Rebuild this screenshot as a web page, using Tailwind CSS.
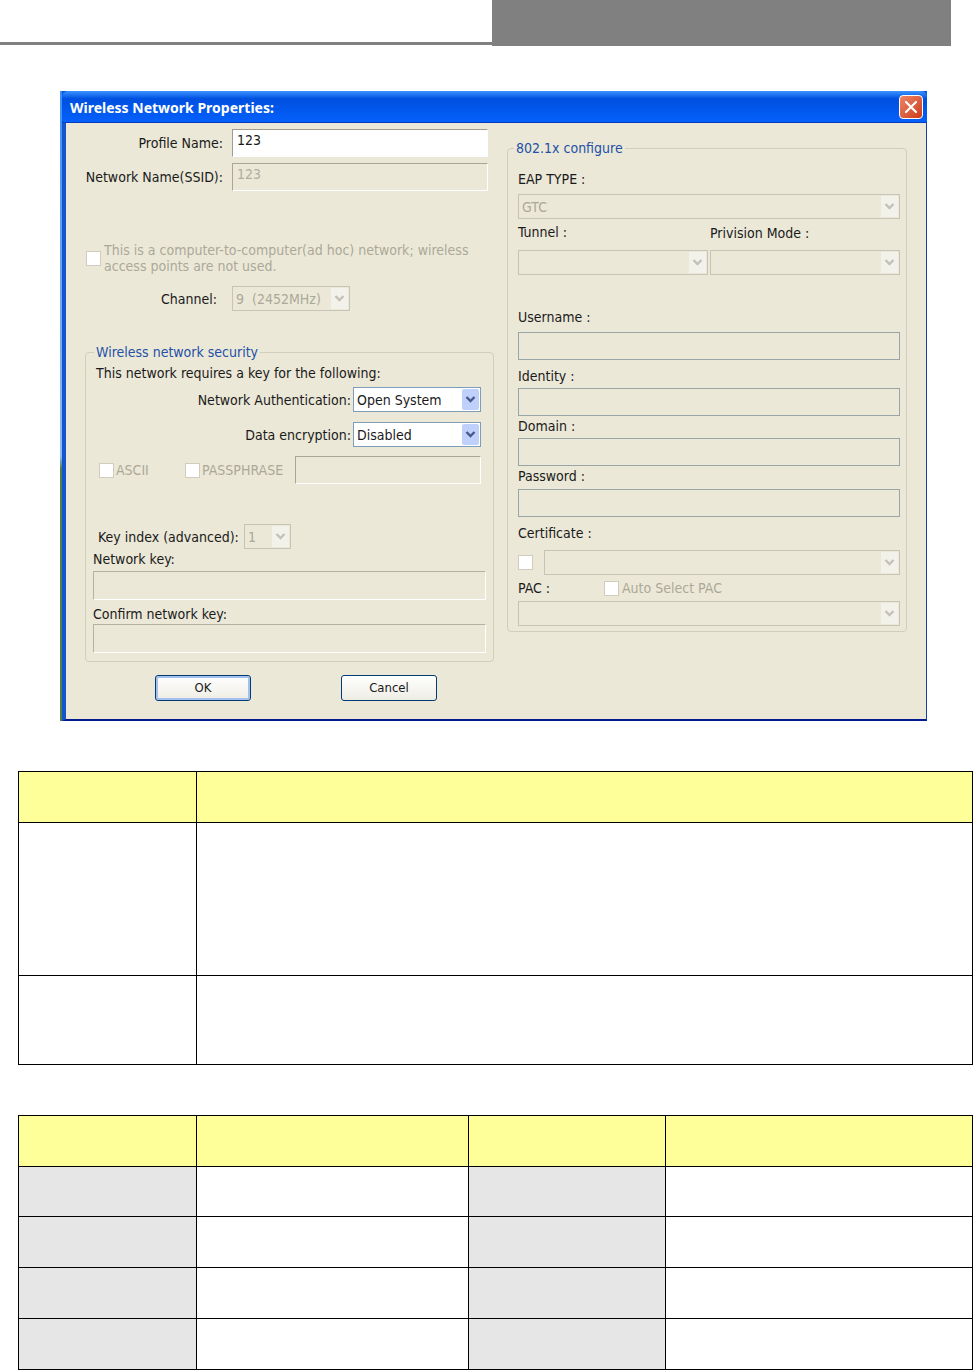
<!DOCTYPE html>
<html lang="en">

<head>
  <meta charset="UTF-8" />
  <meta name="viewport" content="width=device-width, initial-scale=1.0" />
  <title>Wireless Network Properties</title>
  <script src="https://cdn.jsdelivr.net/npm/@tailwindcss/browser@4"></script>
</head>

<body class="bg-white text-[#1a1a1a] text-[14px] leading-5 font-['DejaVu_Sans_Condensed','DejaVu_Sans',sans-serif]">

  <!-- Page header -->
  <header class="flex items-start pr-[22px]">
    <div class="flex-1 h-[45px] border-b-3 border-[#808080]"></div>
    <div class="w-[459px] h-[46px] bg-[#808080]"></div>
  </header>

  <main>
    <!-- Dialog -->
    <section class="mt-[45px] ml-[60px] mr-[46px] flex bg-[#0a55e0]">
      <div class="w-[2px] bg-linear-to-b from-[#3d8ff5] from-0% via-[#8fb8f0] via-58% to-[#4f8048] to-60%"></div>

      <div class="flex-1 min-w-0">
        <div class="h-8 flex items-center justify-between pl-2 pr-1 rounded-t-md bg-linear-to-b from-[#3a93ff] via-[#0050e0] via-25% to-[#0560fa] border-b border-[#0040c0]">
          <h1 class="pt-[2px] text-white text-[14px] font-bold font-['Noto_Sans',sans-serif]">Wireless Network Properties:</h1>
          <button type="button" aria-label="Close" class="size-6 rounded-[4px] border border-white bg-linear-to-br from-[#ee8465] to-[#cc3a14] flex items-center justify-center">
            <svg class="size-4" viewBox="0 0 16 16" fill="none" stroke="#fff" stroke-width="2.2" stroke-linecap="round">
              <path d="M3 3l10 10M13 3L3 13" />
            </svg>
          </button>
        </div>

        <form class="flex items-start gap-[13px] pl-[19px] pr-[19px] pb-[18px] bg-[#ebe8d7] border-l-4 border-r border-b-2 border-l-[#1555cc] border-r-[#1c3fa8] border-b-[#001a90]">

          <!-- Left column -->
          <div class="w-[409px] shrink-0 pt-[6px]">
            <div class="flex items-center gap-[9px] pr-[6px]">
              <label for="profile" class="w-[138px] text-right whitespace-nowrap">Profile Name:</label>
              <input id="profile" type="text" value="123" class="flex-1 min-w-0 h-7 px-1 pb-[6px] bg-white border border-t-[#a09d90] border-l-[#a09d90] border-r-white border-b-white" />
            </div>
            <div class="mt-[6px] flex items-center gap-[9px] pr-[6px]">
              <label for="ssid" class="w-[138px] text-right whitespace-nowrap">Network Name(SSID):</label>
              <input id="ssid" type="text" value="123" disabled class="flex-1 min-w-0 h-7 px-1 pb-[6px] text-[#b0ad9f] border border-t-[#a9a698] border-l-[#a9a698] border-r-white border-b-white" />
            </div>

            <div class="mt-[51px] flex items-center gap-[3px] text-[#aca899]">
              <input id="adhoc" type="checkbox" disabled class="appearance-none size-[15px] shrink-0 ml-px bg-white border border-[#d0cdbf]" />
              <label for="adhoc" class="leading-4 whitespace-nowrap">This is a computer-to-computer(ad hoc) network; wireless<br />access points are not used.</label>
            </div>

            <div class="mt-3 flex items-center gap-[15px]">
              <label for="channel" class="w-[132px] text-right">Channel:</label>
              <div class="relative w-[118px] h-[25px]">
                <select id="channel" disabled class="appearance-none w-full h-full px-[3px] text-[#aca899] border border-[#c6c4b6] opacity-100">
                  <option>9&nbsp; (2452MHz)</option>
                </select>
                <svg class="absolute right-[2px] top-[2px] w-[17px] h-[21px] bg-[#f2f1ea] pointer-events-none" viewBox="0 0 17 21" fill="none" stroke="#c4c2b8" stroke-width="2.4"><path d="M4.500 8l4 4 4-4" /></svg>
              </div>
            </div>

            <fieldset class="mt-[31px] px-[7px] pb-2 border border-[#d0cebf] rounded-[4px]">
              <legend class="ml-px px-[2px] text-[#2450a8]">Wireless network security</legend>
              <p class="pl-[3px] leading-[22px]">This network requires a key for the following:</p>

              <div class="mt-[3px] pr-[5px] flex items-center justify-end gap-[2px]">
                <label for="auth">Network Authentication:</label>
                <div class="relative w-32 h-[25px]">
                  <select id="auth" class="appearance-none w-full h-full px-[3px] bg-white border border-[#7f9db9]">
                    <option>Open System</option>
                    <option>Shared Key</option>
                  </select>
                  <svg class="absolute right-[2px] top-[2px] w-[17px] h-[21px] rounded-[2px] bg-[#bfd0fb] pointer-events-none" viewBox="0 0 17 21" fill="none" stroke="#45598c" stroke-width="2.4"><path d="M4.500 8l4 4 4-4" /></svg>
                </div>
              </div>

              <div class="mt-[10px] pr-[5px] flex items-center justify-end gap-[2px]">
                <label for="encryption">Data encryption:</label>
                <div class="relative w-32 h-[25px]">
                  <select id="encryption" class="appearance-none w-full h-full px-[3px] bg-white border border-[#7f9db9]">
                    <option>Disabled</option>
                    <option>WEP</option>
                  </select>
                  <svg class="absolute right-[2px] top-[2px] w-[17px] h-[21px] rounded-[2px] bg-[#bfd0fb] pointer-events-none" viewBox="0 0 17 21" fill="none" stroke="#45598c" stroke-width="2.4"><path d="M4.500 8l4 4 4-4" /></svg>
                </div>
              </div>

              <div class="mt-[9px] pl-[6px] pr-[5px] flex items-center text-[#aca899]">
                <div class="w-[86px] flex items-center gap-[2px]">
                  <input id="ascii" type="checkbox" disabled class="appearance-none size-[15px] bg-white border border-[#d0cdbf]" />
                  <label for="ascii">ASCII</label>
                </div>
                <div class="w-[110px] flex items-center gap-[2px]">
                  <input id="usePass" type="checkbox" disabled class="appearance-none size-[15px] bg-white border border-[#d0cdbf]" />
                  <label for="usePass">PASSPHRASE</label>
                </div>
                <input type="text" aria-label="Passphrase" disabled class="flex-1 min-w-0 h-7 px-1 border border-t-[#a9a698] border-l-[#a9a698] border-r-white border-b-white" />
              </div>

              <div class="mt-10 pl-[5px] flex items-center">
                <label for="keyIndex" class="w-[146px] whitespace-nowrap">Key index (advanced):</label>
                <div class="relative w-[47px] h-[25px]">
                  <select id="keyIndex" disabled class="appearance-none w-full h-full px-[3px] text-[#aca899] border border-[#c6c4b6] opacity-100">
                    <option>1</option>
                  </select>
                  <svg class="absolute right-[2px] top-[2px] w-[17px] h-[21px] bg-[#f2f1ea] pointer-events-none" viewBox="0 0 17 21" fill="none" stroke="#c4c2b8" stroke-width="2.4"><path d="M4.500 8l4 4 4-4" /></svg>
                </div>
              </div>

              <label for="key" class="block">Network key:</label>
              <input id="key" type="password" disabled class="mt-[2px] block w-full h-[29px] px-1 border border-t-[#b5b2a4] border-l-[#b5b2a4] border-r-white border-b-white" />
              <label for="confirmKey" class="mt-1 block">Confirm network key:</label>
              <input id="confirmKey" type="password" disabled class="block w-full h-[29px] px-1 border border-t-[#b5b2a4] border-l-[#b5b2a4] border-r-white border-b-white" />
            </fieldset>

            <div class="mt-[13px] pl-[70px] flex gap-[90px] text-[13px]">
              <button type="submit" class="w-24 h-[26px] rounded-[3px] border border-[#003c74] bg-linear-to-b from-white to-[#eeede4] ring-2 ring-inset ring-[#a5c0ee]">OK</button>
              <button type="button" class="w-24 h-[26px] rounded-[3px] border border-[#003c74] bg-linear-to-b from-white to-[#eeede4]">Cancel</button>
            </div>
          </div>

          <!-- 802.1x column -->
          <fieldset class="mt-[15px] flex-1 min-w-0 pl-[10px] pr-[6px] pb-[5px] border border-[#d0cebf] rounded-[4px]">
            <legend class="-ml-1 px-[2px] text-[#2450a8]">802.1x configure</legend>

            <label for="eap" class="mt-[11px] block">EAP TYPE :</label>
            <div class="relative mt-[5px] h-[25px]">
              <select id="eap" disabled class="appearance-none w-full h-full px-[3px] text-[#aca899] border border-[#c6c4b6] opacity-100">
                <option>GTC</option>
              </select>
              <svg class="absolute right-[2px] top-[2px] w-[17px] h-[21px] bg-[#f2f1ea] pointer-events-none" viewBox="0 0 17 21" fill="none" stroke="#c4c2b8" stroke-width="2.4"><path d="M4.500 8l4 4 4-4" /></svg>
            </div>

            <div class="mt-[3px] grid grid-cols-2 gap-x-[2px] gap-y-[7px]">
              <label for="tunnel">Tunnel :</label>
              <label for="provision" class="pt-px">Privision Mode :</label>
              <div class="relative h-[25px]">
                <select id="tunnel" disabled class="appearance-none w-full h-full border border-[#c6c4b6] opacity-100"></select>
                <svg class="absolute right-[2px] top-[2px] w-[17px] h-[21px] bg-[#f2f1ea] pointer-events-none" viewBox="0 0 17 21" fill="none" stroke="#c4c2b8" stroke-width="2.4"><path d="M4.500 8l4 4 4-4" /></svg>
              </div>
              <div class="relative h-[25px]">
                <select id="provision" disabled class="appearance-none w-full h-full border border-[#c6c4b6] opacity-100"></select>
                <svg class="absolute right-[2px] top-[2px] w-[17px] h-[21px] bg-[#f2f1ea] pointer-events-none" viewBox="0 0 17 21" fill="none" stroke="#c4c2b8" stroke-width="2.4"><path d="M4.500 8l4 4 4-4" /></svg>
              </div>
            </div>

            <label for="username" class="mt-8 block">Username :</label>
            <input id="username" type="text" disabled class="mt-[5px] block w-full h-7 px-1 border border-[#9aa5a8]" />
            <label for="identity" class="mt-[6px] block">Identity :</label>
            <input id="identity" type="text" disabled class="mt-[2px] block w-full h-7 px-1 border border-[#9aa5a8]" />
            <label for="domain" class="block">Domain :</label>
            <input id="domain" type="text" disabled class="mt-[2px] block w-full h-7 px-1 border border-[#9aa5a8]" />
            <label for="password" class="block">Password :</label>
            <input id="password" type="password" disabled class="mt-[3px] block w-full h-7 px-1 border border-[#9aa5a8]" />

            <label for="certificate" class="mt-[6px] block">Certificate :</label>
            <div class="mt-[7px] flex items-center gap-[11px]">
              <input type="checkbox" aria-label="Use certificate" disabled class="appearance-none size-[15px] bg-white border border-[#d0cdbf]" />
              <div class="relative flex-1 h-[25px]">
                <select id="certificate" disabled class="appearance-none w-full h-full border border-[#c6c4b6] opacity-100"></select>
                <svg class="absolute right-[2px] top-[2px] w-[17px] h-[21px] bg-[#f2f1ea] pointer-events-none" viewBox="0 0 17 21" fill="none" stroke="#c4c2b8" stroke-width="2.4"><path d="M4.500 8l4 4 4-4" /></svg>
              </div>
            </div>

            <div class="mt-[3px] flex items-center">
              <label for="pac" class="w-[86px]">PAC :</label>
              <input id="autoPac" type="checkbox" disabled class="appearance-none size-[15px] bg-white border border-[#d0cdbf]" />
              <label for="autoPac" class="ml-[3px] text-[#aca899]">Auto Select PAC</label>
            </div>
            <div class="relative mt-[3px] h-[25px]">
              <select id="pac" disabled class="appearance-none w-full h-full border border-[#c6c4b6] opacity-100"></select>
              <svg class="absolute right-[2px] top-[2px] w-[17px] h-[21px] bg-[#f2f1ea] pointer-events-none" viewBox="0 0 17 21" fill="none" stroke="#c4c2b8" stroke-width="2.4"><path d="M4.500 8l4 4 4-4" /></svg>
            </div>
          </fieldset>
        </form>
      </div>
    </section>

    <!-- Parameter table -->
    <div class="mt-[50px] pl-[18px]">
      <table class="w-full table-fixed border-collapse border border-black">
        <colgroup>
          <col class="w-[178px]" />
          <col />
        </colgroup>
        <thead>
          <tr class="h-[51px] bg-[#ffff99]">
            <th class="border border-black"></th>
            <th class="border border-black"></th>
          </tr>
        </thead>
        <tbody>
          <tr class="h-[153px]">
            <td class="border border-black"></td>
            <td class="border border-black"></td>
          </tr>
          <tr class="h-[89px]">
            <td class="border border-black"></td>
            <td class="border border-black"></td>
          </tr>
        </tbody>
      </table>
    </div>

    <!-- Value table -->
    <div class="mt-[50px] pl-[18px]">
      <table class="w-full table-fixed border-collapse border border-black">
        <colgroup>
          <col class="w-[178px]" />
          <col class="w-[272px]" />
          <col class="w-[197px]" />
          <col />
        </colgroup>
        <thead>
          <tr class="h-[51px] bg-[#ffff99]">
            <th class="border border-black"></th>
            <th class="border border-black"></th>
            <th class="border border-black"></th>
            <th class="border border-black"></th>
          </tr>
        </thead>
        <tbody>
          <tr class="h-[50px]">
            <td class="border border-black bg-[#e6e6e6]"></td>
            <td class="border border-black"></td>
            <td class="border border-black bg-[#e6e6e6]"></td>
            <td class="border border-black"></td>
          </tr>
          <tr class="h-[51px]">
            <td class="border border-black bg-[#e6e6e6]"></td>
            <td class="border border-black"></td>
            <td class="border border-black bg-[#e6e6e6]"></td>
            <td class="border border-black"></td>
          </tr>
          <tr class="h-[51px]">
            <td class="border border-black bg-[#e6e6e6]"></td>
            <td class="border border-black"></td>
            <td class="border border-black bg-[#e6e6e6]"></td>
            <td class="border border-black"></td>
          </tr>
          <tr class="h-[51px]">
            <td class="border border-black bg-[#e6e6e6]"></td>
            <td class="border border-black"></td>
            <td class="border border-black bg-[#e6e6e6]"></td>
            <td class="border border-black"></td>
          </tr>
        </tbody>
      </table>
    </div>
  </main>
</body>

</html>
